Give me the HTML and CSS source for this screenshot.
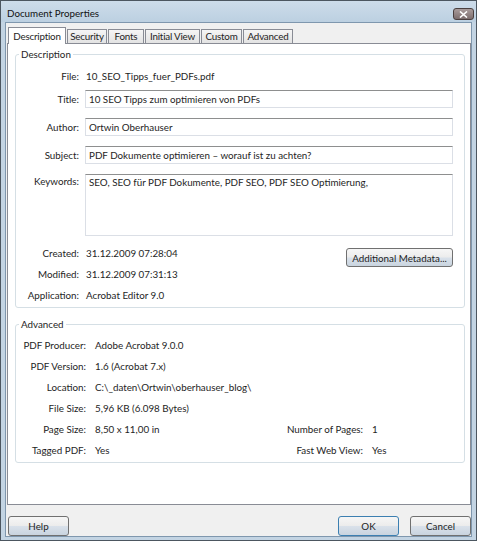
FILE: index.html
```html
<!DOCTYPE html>
<html lang="de">
<head>
<meta charset="utf-8">
<title>Document Properties</title>
<link rel="stylesheet" href="styles.css">
</head>
<body>
<div class="window">
  <div class="titlebar">
    <span class="title">Document Properties</span>
    <div class="close">
      <svg width="9" height="7" viewBox="0 0 9 7"><path d="M1 0.5 L8 6.5 M8 0.5 L1 6.5" stroke="#fff" stroke-width="1.6"/></svg>
    </div>
  </div>
  <div class="client">
    <div class="tabs">
      <div class="tab active t-desc">Description</div>
      <div class="tab t-sec">Security</div>
      <div class="tab t-fonts">Fonts</div>
      <div class="tab t-view">Initial View</div>
      <div class="tab t-custom">Custom</div>
      <div class="tab t-adv">Advanced</div>
    </div>
    <div class="panel">
      <fieldset class="group desc">
        <legend>Description</legend>
        <div class="row file">
          <span class="label">File:</span>
          <span class="value">10_SEO_Tipps_fuer_PDFs.pdf</span>
        </div>
        <div class="row field first">
          <span class="label">Title:</span>
          <div class="input">10 SEO Tipps zum optimieren von PDFs</div>
        </div>
        <div class="row field">
          <span class="label">Author:</span>
          <div class="input">Ortwin Oberhauser</div>
        </div>
        <div class="row field">
          <span class="label">Subject:</span>
          <div class="input">PDF Dokumente optimieren – worauf ist zu achten?</div>
        </div>
        <div class="row field keywords">
          <span class="label">Keywords:</span>
          <div class="input area">SEO, SEO für PDF Dokumente, PDF SEO, PDF SEO Optimierung,</div>
        </div>
        <div class="dates">
          <div class="info">
            <div class="row line"><span class="label">Created:</span><span class="value">31.12.2009 07:28:04</span></div>
            <div class="row line"><span class="label">Modified:</span><span class="value">31.12.2009 07:31:13</span></div>
            <div class="row line"><span class="label">Application:</span><span class="value">Acrobat Editor 9.0</span></div>
          </div>
          <button class="btn meta">Additional Metadata...</button>
        </div>
      </fieldset>
      <fieldset class="group adv">
        <legend>Advanced</legend>
        <div class="advgrid">
          <span class="label">PDF Producer:</span><span class="value wide">Adobe Acrobat 9.0.0</span>
          <span class="label">PDF Version:</span><span class="value wide">1.6 (Acrobat 7.x)</span>
          <span class="label">Location:</span><span class="value wide">C:\_daten\Ortwin\oberhauser_blog\</span>
          <span class="label">File Size:</span><span class="value wide">5,96 KB (6.098 Bytes)</span>
          <span class="label">Page Size:</span><span class="value">8,50 x 11,00 in</span>
          <span class="label">Number of Pages:</span><span class="value">1</span>
          <span class="label">Tagged PDF:</span><span class="value">Yes</span>
          <span class="label">Fast Web View:</span><span class="value">Yes</span>
        </div>
      </fieldset>
    </div>
    <div class="footer">
      <button class="btn">Help</button>
      <span class="spacer"></span>
      <button class="btn default">OK</button>
      <button class="btn">Cancel</button>
    </div>
  </div>
</div>
</body>
</html>
```

FILE: styles.css
```css
* { box-sizing: border-box; }

html, body {
  margin: 0;
  padding: 0;
  background: #ffffff;
}

body {
  font-family: Lato, "Liberation Sans", sans-serif;
  font-size: 9.8px;
  color: #1e1e1e;
}

.window {
  width: 477px;
  height: 541px;
  border: 1px solid #4c5660;
  background: #c3d4e3;
  display: flex;
  flex-direction: column;
}

.titlebar {
  height: 21px;
  flex: none;
  display: flex;
  align-items: flex-start;
  background: linear-gradient(#cddcea, #bcd0e1);
  padding-left: 6px;
}

.title {
  line-height: 24px;
  color: #111;
}

.close {
  margin-left: auto;
  margin-right: 2px;
  margin-top: 7px;
  width: 21px;
  height: 12px;
  border: 1px solid #4a3f3f;
  border-radius: 3px;
  background: linear-gradient(#a99c9c, #7c6d6d);
  display: flex;
  align-items: center;
  justify-content: center;
}

.client {
  flex: 1;
  margin: 0 4px 3px 4px;
  border: 1px solid #7f97ae;
  background: #f0f0f0;
  display: flex;
  flex-direction: column;
  padding: 4px 0 0 0;
}

.tabs {
  height: 16px;
  display: flex;
  align-items: flex-end;
  padding-left: 2px;
  position: relative;
  z-index: 1;
}

.tab {
  height: 14px;
  line-height: 13px;
  padding: 0;
  text-align: center;
  white-space: nowrap;
  letter-spacing: -0.2px;
  border: 1px solid #898c95;
  border-bottom: none;
  background: linear-gradient(#f5f5f5, #e3e3e3);
  margin-right: 1px;
  color: #1e1e1e;
}

.tab.active {
  height: 17px;
  line-height: 16px;
  background: #ffffff;
  margin-bottom: -1px;
  margin-right: 1px;
}

.t-desc { width: 58px; }
.t-sec { width: 40px; }
.t-fonts { width: 36px; }
.t-view { width: 55px; }
.t-custom { width: 41px; }
.t-adv { width: 50px; }

.panel {
  height: 462px;
  flex: none;
  margin-left: 1px;
  background: #ffffff;
  border: 1px solid #898c95;
  padding-top: 3px;
}

.group {
  margin: 0 5px 0 7px;
  border: 1px solid #d5dfe5;
  border-radius: 3px;
  padding: 4px 11px 2px 0;
  min-width: 0;
}

.group legend {
  margin-left: 3px;
  padding: 0 2px;
  line-height: 14px;
  color: #1e1e1e;
}

.group.adv {
  margin-top: 9px;
  padding-top: 3px;
}

.row {
  display: flex;
  align-items: center;
}

.label {
  text-align: right;
  white-space: nowrap;
}

.desc .label {
  width: 63px;
  flex: none;
  margin-right: 6px;
}

.row.file {
  height: 22px;
}

.row.file .value {
  padding-left: 1px;
}

.row.field {
  margin-top: 10px;
}

.row.field.first {
  margin-top: 3px;
}

.input {
  flex: 1;
  height: 18px;
  line-height: 16px;
  padding: 0 3px;
  border: 1px solid #dbdfe6;
  border-top-color: #8e8f8f;
  background: #ffffff;
  white-space: nowrap;
  overflow: hidden;
}

.row.keywords {
  align-items: flex-start;
}

.row.keywords .label {
  line-height: 15px;
}

.input.area {
  height: 62px;
  line-height: 15px;
  white-space: normal;
}

.dates {
  margin-top: 6px;
  display: flex;
  align-items: flex-start;
}

.info {
  flex: 1;
}

.row.line {
  height: 21px;
}

.row.line .value {
  padding-left: 1px;
}

.btn {
  font-family: Lato, "Liberation Sans", sans-serif;
  font-size: 9.8px;
  color: #1e1e1e;
  height: 20px;
  padding: 0;
  border: 1px solid #707070;
  border-radius: 3px;
  background: linear-gradient(#f6f6f6 0%, #ececec 48%, #d9e1ea 52%, #c9d4df 100%);
}

.btn.meta {
  margin-top: 6px;
  width: 107px;
  height: 19px;
}

.btn.default {
  border-color: #3c7fb1;
}

.advgrid {
  display: grid;
  grid-template-columns: 70px 159px 100px auto;
  grid-auto-rows: 21px;
  column-gap: 9px;
  align-items: center;
}

.advgrid .value.wide {
  grid-column: 2 / -1;
}

.footer {
  display: flex;
  align-items: flex-start;
  padding: 11px 0 0 2px;
  gap: 11px;
}

.footer .btn {
  width: 61px;
}

.spacer {
  flex: 1;
}
```
